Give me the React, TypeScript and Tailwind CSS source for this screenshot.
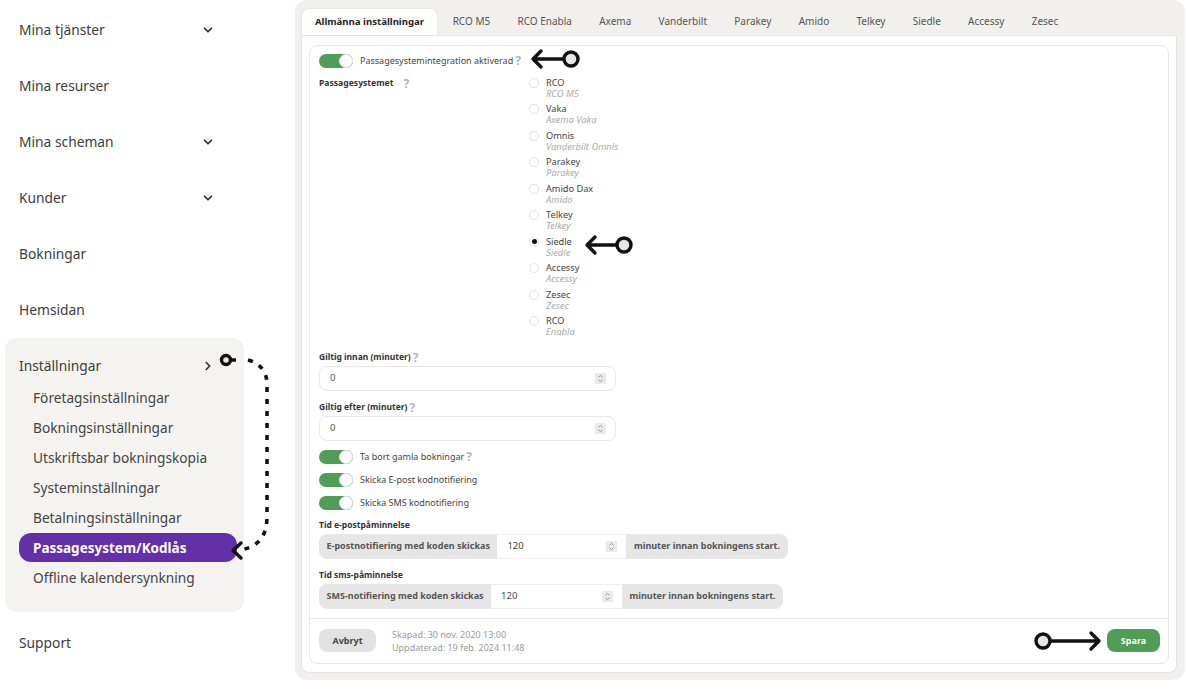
import { ChevronDown, ChevronRight } from "lucide-react";

const font = "font-['Noto_Sans',sans-serif]";

const Nav = ({ label, chevron }: { label: string; chevron?: boolean }) => (
  <div className="flex h-[56px] items-center justify-between pl-[19px] pr-[80px] text-[13.8px] text-[#3c3c3c]">
    <span>{label}</span>
    {chevron && <ChevronDown size={14} strokeWidth={3} className="text-[#333]" />}
  </div>
);

const Help = ({ className = "" }: { className?: string }) => (
  <span className={`text-[12px] font-bold leading-none text-[#b5b5b5] ${className}`}>?</span>
);

const Toggle = () => (
  <div className="flex h-[14px] w-[34px] shrink-0 justify-end rounded-full bg-[#4f9d57]">
    <div className="h-[14px] w-[14px] rounded-full border border-[#e4e4e4] bg-white" />
  </div>
);

const ToggleRow = ({ label, help, className = "" }: { label: string; help?: boolean; className?: string }) => (
  <div className={`flex h-[14px] items-center ${className}`}>
    <Toggle />
    <span className="ml-[7px] text-[9px] text-[#444]">{label}</span>
    {help && <Help className="ml-[2px]" />}
  </div>
);

const Spinner = () => (
  <svg width="11" height="11" viewBox="0 0 11 11" className="shrink-0 bg-[#e9e9ee]">
    <path d="M3.5 4.2 5.5 2.4l2 1.8M3.5 6.8l2 1.8 2-1.8" fill="none" stroke="#8a8a8a" strokeWidth="0.9" />
  </svg>
);

const NumberField = ({ value }: { value: string }) => (
  <div className="mt-[2px] flex h-[25px] w-[297px] items-center justify-between rounded-lg border border-[#e8e8e8] pl-[10px] pr-[9px] text-[9.5px] text-[#555]">
    <span>{value}</span>
    <Spinner />
  </div>
);

const Addon = ({ text }: { text: string }) => (
  <span className="flex items-center whitespace-nowrap bg-[#e6e6e6] px-[7.5px] text-[9px] font-bold text-[#555]">{text}</span>
);

const ReminderGroup = ({ before, inputWidth }: { before: string; inputWidth: string }) => (
  <div className="mt-[3px] flex h-[25px] w-fit overflow-hidden rounded-lg">
    <Addon text={before} />
    <div className={`flex items-center justify-between border-y border-[#eee] pl-[10px] pr-[9px] text-[9.5px] text-[#444] ${inputWidth}`}>
      <span>120</span>
      <Spinner />
    </div>
    <Addon text="minuter innan bokningens start." />
  </div>
);

const systems = [
  ["RCO", "RCO M5"],
  ["Vaka", "Axema Vaka"],
  ["Omnis", "Vanderbilt Omnis"],
  ["Parakey", "Parakey"],
  ["Amido Dax", "Amido"],
  ["Telkey", "Telkey"],
  ["Siedle", "Siedle"],
  ["Accessy", "Accessy"],
  ["Zesec", "Zesec"],
  ["RCO", "Enabla"],
];

const tabs = ["RCO M5", "RCO Enabla", "Axema", "Vanderbilt", "Parakey", "Amido", "Telkey", "Siedle", "Accessy", "Zesec"];

const subItems = ["Företagsinställningar", "Bokningsinställningar", "Utskriftsbar bokningskopia", "Systeminställningar", "Betalningsinställningar"];

const App = () => {
  return (
    <div className={`relative flex h-[680px] w-[1186px] overflow-hidden bg-white ${font}`}>
      <aside className="w-[295px] shrink-0 pt-[2px]">
        <Nav label="Mina tjänster" chevron />
        <Nav label="Mina resurser" />
        <Nav label="Mina scheman" chevron />
        <Nav label="Kunder" chevron />
        <Nav label="Bokningar" />
        <Nav label="Hemsidan" />
        <div className="ml-[5px] h-[274px] w-[239px] rounded-xl bg-[#f4f3ef] pl-[14px] pt-[13px]">
          <div className="flex h-[30px] items-center justify-between pr-[29px] text-[13.8px] text-[#3c3c3c]">
            <span>Inställningar</span>
            <ChevronRight size={14} strokeWidth={3} className="text-[#333]" />
          </div>
          <div className="mt-[2px] flex flex-col">
            {subItems.map((item) => (
              <div key={item} className="flex h-[30px] items-center pl-[14px] text-[13.7px] text-[#444]">{item}</div>
            ))}
            <div className="flex h-[29px] w-[218px] items-center rounded-xl bg-[#6430a8] pl-[14px] pt-px text-[13.5px] font-bold text-white">Passagesystem/Kodlås</div>
            <div className="mt-[1px] flex h-[30px] items-center pl-[14px] text-[13.7px] text-[#444]">Offline kalendersynkning</div>
          </div>
        </div>
        <div className="mt-[21px] pl-[19px] text-[13.8px] text-[#3c3c3c]">Support</div>
      </aside>

      <main className="mr-[1px] flex flex-1 flex-col rounded-xl bg-[#f1f0ec] pb-[7px] pl-[6px] pr-[8px] pt-[8px]">
        <div className="flex h-[28px] text-[10px] text-[#555]">
          <div className="mr-px flex w-[137px] items-center justify-center rounded-t-lg border border-b-0 border-[#e6e6e6] bg-white text-[9.6px] font-bold text-[#222]">Allmänna inställningar</div>
          {tabs.map((tab) => (
            <div key={tab} className="flex items-center px-[13.65px]">{tab}</div>
          ))}
        </div>
        <div className="flex-1 rounded-b-lg border border-[#e3e3e3] bg-white pb-[8px] pl-[7px] pr-[7px] pt-[9px]">
          <div className="flex h-[619px] flex-col rounded-lg border border-[#e6e6e6] pl-[9px] pr-[9px] pt-[8px]">
            <ToggleRow label="Passagesystemintegration aktiverad" help />
            <div className="mt-[8.5px] flex h-[265px]">
              <div className="flex h-[14px] w-[210px] shrink-0 items-center text-[8.6px] font-bold text-[#333]">
                Passagesystemet
                <Help className="ml-[10px]" />
              </div>
              <div className="flex flex-col">
                {systems.map(([name, sub], i) => (
                  <div key={name + sub} className="flex h-[26.5px] items-start">
                    <div className={`mt-[1px] flex h-[10px] w-[10px] items-center justify-center rounded-full border border-[#e2e2e2] ${i === 6 ? "bg-white" : ""}`}>
                      {i === 6 && <div className="h-[5px] w-[5px] rounded-full bg-[#111]" />}
                    </div>
                    <div className="ml-[7px] flex flex-col">
                      <span className="h-[11px] text-[9.2px] leading-[11px] text-[#444]">{name}</span>
                      <span className="h-[11px] text-[9.4px] italic leading-[11px] text-[#aaa]">{sub}</span>
                    </div>
                  </div>
                ))}
              </div>
            </div>
            <div className="mt-[10px] flex h-[12px] items-center text-[8.5px] font-bold text-[#333]">
              Giltig innan (minuter)
              <Help className="ml-[2px]" />
            </div>
            <NumberField value="0" />
            <div className="mt-[11px] flex h-[12px] items-center text-[8.5px] font-bold text-[#333]">
              Giltig efter (minuter)
              <Help className="ml-[2px]" />
            </div>
            <NumberField value="0" />
            <ToggleRow label="Ta bort gamla bokningar" help className="mt-[9px]" />
            <ToggleRow label="Skicka E-post kodnotifiering" className="mt-[9px]" />
            <ToggleRow label="Skicka SMS kodnotifiering" className="mt-[9px]" />
            <div className="mt-[9px] h-[12px] text-[8.5px] font-bold leading-[12px] text-[#333]">Tid e-postpåminnelse</div>
            <ReminderGroup before="E-postnotifiering med koden skickas" inputWidth="w-[129px]" />
            <div className="mt-[10px] h-[12px] text-[8.5px] font-bold leading-[12px] text-[#333]">Tid sms-påminnelse</div>
            <ReminderGroup before="SMS-notifiering med koden skickas" inputWidth="w-[131px]" />
            <div className="-mx-[9px] mt-[9px] flex flex-1 items-center justify-between border-t border-[#e6e6e6] pl-[9px] pr-[8px]">
              <div className="flex items-center">
                <div className="flex h-[23px] w-[57px] items-center justify-center rounded-lg bg-[#e2e2e4] text-[9px] font-bold text-[#444]">Avbryt</div>
                <div className="ml-[16px] text-[9px] leading-[13px] text-[#999]">
                  <div>Skapad: 30 nov. 2020 13:00</div>
                  <div>Uppdaterad: 19 feb. 2024 11:48</div>
                </div>
              </div>
              <div className="flex h-[23px] w-[53px] items-center justify-center rounded-lg bg-[#4f9d57] text-[9px] font-bold text-white">Spara</div>
            </div>
          </div>
        </div>
      </main>

      {/* annotation arrows drawn on top of the screenshot */}
      <svg className="pointer-events-none absolute left-0 top-0" width="1186" height="680" fill="none" stroke="#111" strokeLinecap="round" strokeLinejoin="round">
        <g strokeWidth="3.4">
          <path d="M533 59h30M541 51l-8 8 8 8" />
          <circle cx="571" cy="59" r="7" fill="#e6e6e6" />
          <path d="M587 245h29M595 237l-8 8 8 8" />
          <circle cx="624" cy="245" r="7" fill="#e6e6e6" />
          <path d="M1051 641h47M1091 633l8 8-8 8" />
          <circle cx="1043" cy="641" r="7" fill="#e6e6e6" />
          <path d="M241 543l-8 7.5 8 7.5" />
          <circle cx="226" cy="360" r="4.5" fill="#e6e6e6" />
          <path d="M231 360h5" strokeLinecap="butt" />
        </g>
        <path d="M248 360c12 3 19 12 19 24v132c0 20-8 31-27 34" strokeWidth="3.6" strokeDasharray="5 7" strokeLinecap="butt" />
      </svg>
    </div>
  );
};

export default App;
